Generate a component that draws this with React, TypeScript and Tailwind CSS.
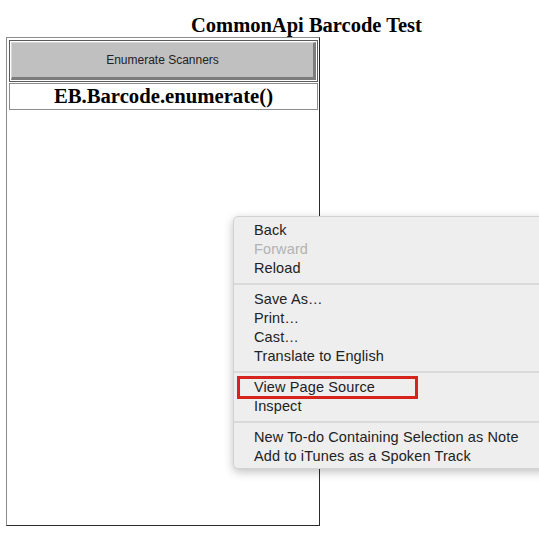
const menuGroups = [
  [
    { label: 'Back' },
    { label: 'Forward', disabled: true },
    { label: 'Reload' },
  ],
  [
    { label: 'Save As…' },
    { label: 'Print…' },
    { label: 'Cast…' },
    { label: 'Translate to English' },
  ],
  [{ label: 'View Page Source' }, { label: 'Inspect' }],
  [
    { label: 'New To-do Containing Selection as Note' },
    { label: 'Add to iTunes as a Spoken Track' },
  ],
];

const ContextMenu = () => (
  <div
    className="absolute left-[233px] top-[216px] w-[330px] h-[253px] rounded-[5px] border border-[#d2d2d2] bg-[#eeeeee] shadow-[0_3px_10px_rgba(0,0,0,0.25)] pt-[4px] pb-[4px] text-[14.5px] tracking-[0.12px] leading-[19px] text-[#222] font-['Liberation_Sans',Arial,sans-serif]"
  >
    {menuGroups.map((group, gi) => (
      <div key={gi}>
        {gi > 0 && <div className="my-[5px] h-[2px] bg-[#dadada]" />}
        {group.map((item) => (
          <div
            key={item.label}
            className={`pl-[20px] whitespace-nowrap ${item.disabled ? 'text-[#b2b2b2]' : ''}`}
          >
            {item.label}
          </div>
        ))}
      </div>
    ))}
  </div>
);

export default function App() {
  return (
    <div className="relative w-[539px] h-[535px] overflow-hidden bg-white font-['Liberation_Serif','Times_New_Roman',serif] text-black">
      {/* Title */}
      <h1 className="pt-[14px] pl-[191px] text-[20.5px] leading-[23px] font-bold whitespace-nowrap">
        CommonApi Barcode Test
      </h1>

      {/* Main panel */}
      <div className="ml-[6px] w-[314px] h-[489px] border border-t-[#8c8c8c] border-l-[#8c8c8c] border-r-[#2b2b2b] border-b-[#2b2b2b] pt-[2px] pl-[2px] flex flex-col gap-[1px]">
        <div className="w-[309px] h-[42px] border border-[#5a5a5a] p-[1px]">
          <button className="w-full h-full bg-[#c0c0c0] border-t border-l border-t-[#d6d6d6] border-l-[#d6d6d6] border-r-[3px] border-b-[3px] border-r-[#7c7c7c] border-b-[#7c7c7c] text-[12px] text-[#222] font-['Liberation_Sans',Arial,sans-serif] flex items-center justify-center pb-[1px]">
            Enumerate Scanners
          </button>
        </div>
        <div className="w-[309px] h-[27px] border border-[#8c8c8c] flex items-center justify-center text-[20.7px] leading-[23px] font-bold">
          EB.Barcode.enumerate()
        </div>
      </div>

      <ContextMenu />

      {/* Highlight box */}
      <div className="absolute left-[237px] top-[376px] w-[181px] h-[23px] border-[3px] border-[#d6231b]" />
    </div>
  );
}
